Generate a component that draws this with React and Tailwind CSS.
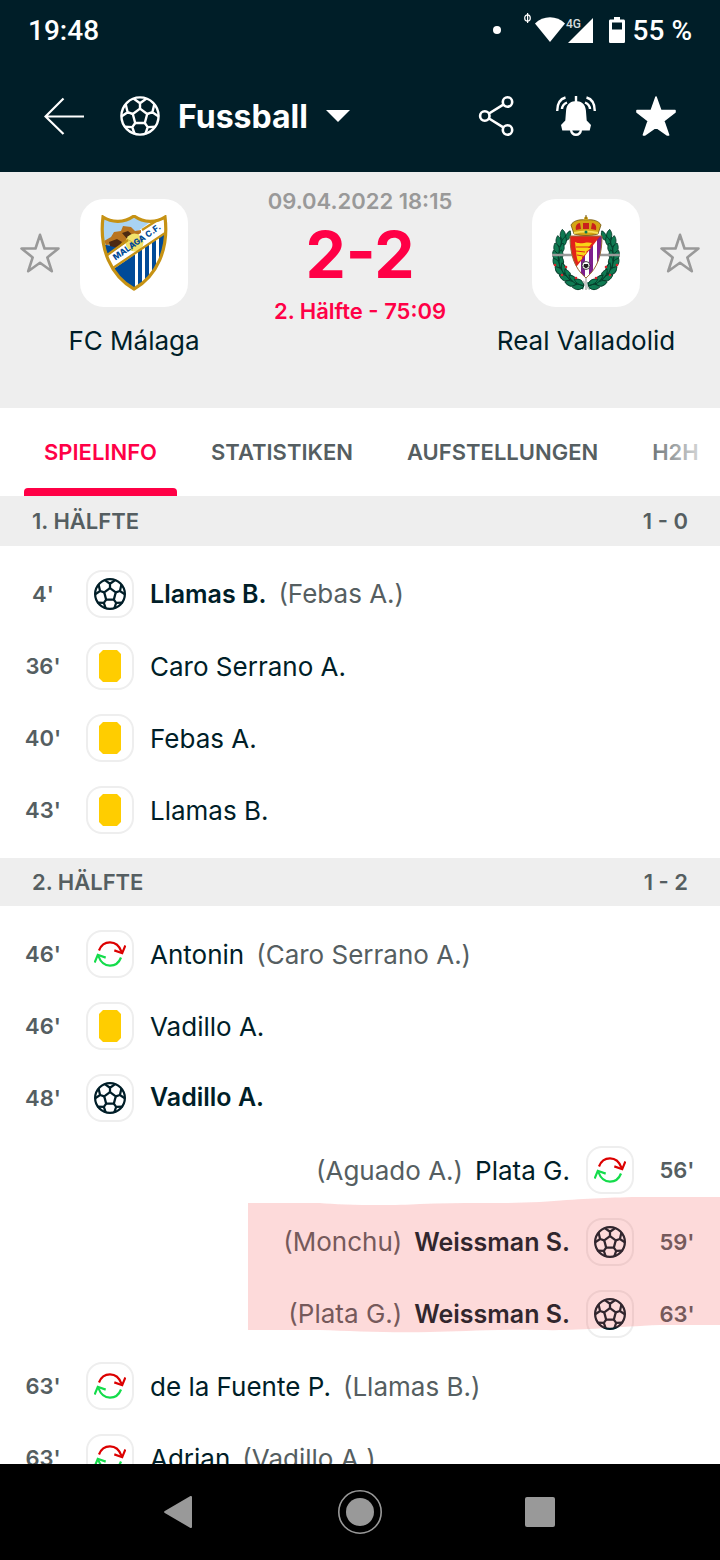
const EVENTS_1 = [
  { minute: "4'", type: "goal", name: "Llamas B.", extra: "(Febas A.)" },
  { minute: "36'", type: "card", name: "Caro Serrano A." },
  { minute: "40'", type: "card", name: "Febas A." },
  { minute: "43'", type: "card", name: "Llamas B." },
];

const EVENTS_2 = [
  { minute: "46'", type: "sub", name: "Antonin", extra: "(Caro Serrano A.)" },
  { minute: "46'", type: "card", name: "Vadillo A." },
  { minute: "48'", type: "goal", name: "Vadillo A." },
  { minute: "56'", type: "sub", name: "Plata G.", extra: "(Aguado A.)", away: true },
];

const MARKED = [
  { minute: "59'", type: "goal", name: "Weissman S.", extra: "(Monchu)", away: true },
  { minute: "63'", type: "goal", name: "Weissman S.", extra: "(Plata G.)", away: true },
];

const EVENTS_3 = [
  { minute: "63'", type: "sub", name: "de la Fuente P.", extra: "(Llamas B.)" },
  { minute: "63'", type: "sub", name: "Adrian", extra: "(Vadillo A.)" },
];

function Ball({ className, strokeWidth = 2.4 }) {
  return (
    <svg viewBox="0 0 40 40" className={className} fill="none" stroke="currentColor" strokeWidth={strokeWidth} strokeLinejoin="round" aria-hidden="true">
      <circle cx="20" cy="20" r="18.6" />
      <path d="M20 12.600 27.200 18l-2.400 9h-9.600l-2.400-9z" />
      <path d="M20 12.600V7.200L13.500 2.600M20 7.200l6.500-4.600M27.200 18l5.200-1.800 1.900-8M32.400 16.200 38.600 20.500M24.800 27l2.900 4.100 8.100-.4M27.700 31.100 25.400 38M15.200 27l-2.900 4.100-8.100-.4M12.300 31.100 14.600 38M12.800 18l-5.200-1.800-1.900-8M7.600 16.200 1.400 20.500" />
    </svg>
  );
}

function SubIcon() {
  return (
    <svg viewBox="0 0 32 32" className="size-8" fill="none" strokeWidth="2.2" aria-hidden="true">
      <path d="M5 12.500C7 7.200 11 4.400 16 4.400c5.200 0 9.400 3.400 11.600 9.600" stroke="#dc0000" />
      <path d="M20.300 12.400l7.900 2.800 3.200-7.800" stroke="#dc0000" />
      <path d="M27 19.500c-2 5.300-6 8.100-11 8.100-5.200 0-9.400-3.400-11.600-9.600" stroke="#14dc4b" />
      <path d="M11.700 19.600l-7.900-2.800L.6 24.600" stroke="#14dc4b" />
    </svg>
  );
}

function EventIcon({ type }) {
  return (
    <span className="flex size-12 shrink-0 items-center justify-center rounded-2xl border-2 border-[#eeeeee] text-[#001e28]">
      {type === "goal" && <Ball className="size-8" strokeWidth={2.8} />}
      {type === "card" && (
        <svg viewBox="0 0 22 32" className="h-8 w-[22px]" aria-hidden="true">
          <path d="M4 0h14l4 4v24l-4 4H4l-4-4V4z" fill="#ffcd00" />
        </svg>
      )}
      {type === "sub" && <SubIcon />}
    </span>
  );
}

function EventRow({ event }) {
  const { minute, type, name, extra, away } = event;
  return (
    <li className={`flex h-[72px] items-center ${away ? "flex-row-reverse" : ""}`}>
      <span className="w-[86px] shrink-0 text-center text-[22px] font-semibold text-[#555e61]">{minute}</span>
      <EventIcon type={type} />
      <span className={`flex items-baseline gap-3 px-4 text-[26px] whitespace-nowrap ${away ? "flex-row-reverse" : ""}`}>
        <span className={type === "goal" ? "text-[25px] font-semibold text-[#001e28]" : "text-[#001e28]"}>{name}</span>
        {extra && <span className="text-[#555e61]">{extra}</span>}
      </span>
    </li>
  );
}

function EventList({ events }) {
  return (
    <ul>
      {events.map((e, i) => (
        <EventRow key={i} event={e} />
      ))}
    </ul>
  );
}

function SectionBar({ title, score }) {
  return (
    <h2 className="flex h-12 items-center justify-between bg-[#eeeeee] px-8 text-[22px] font-semibold text-[#555e61] first:h-[50px]">
      <span>{title}</span>
      <span>{score}</span>
    </h2>
  );
}

function StarButton({ label }) {
  return (
    <button type="button" aria-label={label} className="mt-[34px] size-10 shrink-0 text-[#999999]">
      <svg viewBox="0 0 40 40" className="size-10" fill="none" stroke="currentColor" strokeWidth="2.6" strokeLinejoin="round" aria-hidden="true">
        <path d="M20 1.800l4.500 13.700h14L27.300 24.400l4.500 13.800L20 29.800 8.200 38.200l4.500-13.800L1.500 15.500h14z" />
      </svg>
    </button>
  );
}

function MalagaCrest() {
  return (
    <svg viewBox="0 0 68 76" className="h-[76px] w-[68px]" aria-hidden="true">
      <defs>
        <clipPath id="malaga-shield">
          <path d="M3 2c9 6 21 6 31-1 10 7 22 7 31 1 4 32-8 59-31 72C11 61-1 34 3 2z" />
        </clipPath>
      </defs>
      <g clipPath="url(#malaga-shield)">
        <path d="M0 0h68v76H0z" fill="#fff" />
        <path d="M0 0h60L0 44z" fill="#a9d3f2" />
        <path d="M0 29l12 2 14-1-16 12z" fill="#004a98" />
        <path d="M4 26l7-4 3-5 7-1 2-5 8 1 4 4 6-1v6L22 34l-8-5-8 1z" fill="#b9741f" />
        <path d="M9 27l8-3 5 3-4 6-8-2zM22 18l6-2 6 5-6 4z" fill="#4d2a12" />
        <path d="M12 55 34 40v36z" fill="#004a98" />
        <path d="M34 40v36" stroke="#004a98" strokeWidth="2" />
        <path d="M38 36.500l4-3V76h-4zM45 31.500l4-3V76h-4zM52 26.500l4-3V76h-4zM59 21.500l5-3.500V76h-5z" fill="#004a98" />
        <path d="M8 40 66 1v17L15 52z" fill="#fff" />
      </g>
      <circle cx="34.500" cy="27.500" r="9" fill="#f2e26b" />
      <path d="M27 24l7 4 7-4M34 28l-2 8" fill="none" stroke="#c9b23e" strokeWidth=".8" />
      <g clipPath="url(#malaga-shield)">
        <path d="M6 41 28 25M42 15 64 1M13 53 68 16" fill="none" stroke="#c69214" strokeWidth="2.4" />
      </g>
      <text transform="translate(15.500 45.500) rotate(-35)" fontFamily="Inter, sans-serif" fontSize="8.400" fontWeight="800" fill="#004a98">MALAGA C.F.</text>
      <path d="M3 2c9 6 21 6 31-1 10 7 22 7 31 1 4 32-8 59-31 72C11 61-1 34 3 2z" fill="none" stroke="#c69214" strokeWidth="3.2" />
    </svg>
  );
}

const LEAVES = [
  [13, 22, -10], [9, 28, -5], [7, 35, 0], [6, 42, 5], [7, 49, 15], [10, 56, 30], [15, 62, 45], [21, 67, 60], [28, 70, 75],
];

function Laurel() {
  return (
    <g>
      <path d="M14 20C0 38 6 64 32 71" fill="none" stroke="#0a5c40" strokeWidth="7" />
      {LEAVES.map(([x, y, r]) => (
        <g key={y} transform={`translate(${x} ${y}) rotate(${-r})`}>
          <path d="M0 4C-6 2-6-3-4-7 0-5 1-1 0 4zM0 4C6 2 6-3 4-7 1-5 0-1 0 4z" fill="#0f7a52" stroke="#063d2b" strokeWidth=".9" />
        </g>
      ))}
      <g fill="#d8232a">
        <circle cx="3" cy="50" r="1.3" />
        <circle cx="14" cy="52" r="1.3" />
        <circle cx="10" cy="60" r="1.3" />
        <circle cx="24" cy="63" r="1.3" />
      </g>
    </g>
  );
}

function ValladolidCrest() {
  return (
    <svg viewBox="0 0 68 76" className="h-[76px] w-[68px]" aria-hidden="true">
      <Laurel />
      <g transform="translate(68 0) scale(-1 1)">
        <Laurel />
      </g>
      <path d="M0 40h68" stroke="#9a9a9a" strokeWidth="2.4" />
      <path d="M34 62v13M31 66l6 8" stroke="#c7c7c7" strokeWidth="2" />
      <defs>
        <clipPath id="valladolid-shield">
          <path d="M18 21h32c0 18-4 32-16 42C22 53 18 39 18 21z" />
        </clipPath>
      </defs>
      <g clipPath="url(#valladolid-shield)">
        <path d="M18 20h32v44H18z" fill="#fff" />
        <path d="M29 20h4v44h-4zM37 20h4v44h-4zM45 20h6v44h-6z" fill="#7d1f8d" />
        <path d="M18 20h31L25 51l-7 2z" fill="#e2231a" />
        <path d="M23 27c6 3 11-1 17 1l-4 5h3l-5 4 1 1-5 4v2l-4 3c-2-6-2-13-3-20z" fill="#f9d616" />
        <path d="M24 32h13M24 36l9 1M25 40l6 1" stroke="#e2231a" strokeWidth="1" />
      </g>
      <path d="M18 21h32c0 18-4 32-16 42C22 53 18 39 18 21z" fill="none" stroke="#9a6a34" strokeWidth="1" />
      <circle cx="34" cy="50.500" r="4" fill="#fff" stroke="#222" strokeWidth=".8" />
      <path d="M32 49h4l.6 2.600L34 53.500l-2.600-1.900z" fill="#222" />
      <path d="M22 19 19 10c2-4 8-6 15-5 7-1 13 1 15 5l-3 9c-8 2-16 2-24 0z" fill="#d4a514" stroke="#6e5310" strokeWidth=".8" />
      <path d="M24 15c-1-4 1-7 4-7l1 6zM31 14V8h6v6zM39 14l1-6c3 0 5 3 4 7z" fill="#c9201c" />
      <path d="M22 18c8-2 16-2 24 0" fill="none" stroke="#f6df58" strokeWidth="2" />
      <circle cx="34" cy="17" r="1.5" fill="#0b7a50" />
      <circle cx="34" cy="3.500" r="2" fill="#d4a514" />
      <path d="M34 0v4" stroke="#6e5310" strokeWidth="1" />
    </svg>
  );
}

function Team({ name, children }) {
  return (
    <div className="flex w-[108px] shrink-0 flex-col items-center">
      <div className="flex size-[108px] items-center justify-center rounded-3xl bg-white">{children}</div>
      <span className="mt-4 text-[26px] leading-9 whitespace-nowrap text-[#001e28]">{name}</span>
    </div>
  );
}

function StatusBar() {
  return (
    <div className="flex h-[60px] items-center justify-between px-7 pt-0.5 font-[Roboto,sans-serif] text-[28px] font-medium">
      <span>19:48</span>
      <div className="flex items-center gap-1">
        <svg viewBox="0 0 140 40" className="h-10 w-[140px]" fill="currentColor" aria-hidden="true">
          <circle cx="8" cy="19" r="4" />
          <ellipse cx="38.500" cy="7" rx="2.800" ry="3.200" fill="none" stroke="currentColor" strokeWidth="1.2" />
          <path d="M38 2h1.200v10H38z" />
          <path d="M46 12.500C54 4.200 68 4.200 76 12.500L61 31z" />
          <text x="77" y="17" fontSize="12" fontFamily="Roboto, sans-serif" fill="#d5dbdd">4G</text>
          <path d="M104 7v25H79z" />
          <path d="M120 10c0-1 .6-1.600 1.600-1.600H125V6h6v2.400h3.400c1 0 1.600.6 1.600 1.600v20.400c0 1-.6 1.600-1.600 1.600h-12.800c-1 0-1.600-.6-1.600-1.600zM123 11.500v7h10v-7z" fillRule="evenodd" />
        </svg>
        <span>55 %</span>
      </div>
    </div>
  );
}

function AppBar() {
  return (
    <div className="flex h-28 items-center px-11">
      <button type="button" aria-label="Zurück">
        <svg viewBox="0 0 40 40" className="size-10" fill="none" stroke="currentColor" strokeWidth="2.2" aria-hidden="true">
          <path d="M40 20.500H1.500M19.500 2.500 1.500 20.500l18 17.500" />
        </svg>
      </button>
      <button type="button" className="ml-9 flex items-center gap-[18px]">
        <Ball className="size-10" />
        <span className="pt-0.5 text-[32px] leading-10 font-bold">Fussball</span>
        <svg viewBox="0 0 24 12" className="h-3 w-6" fill="currentColor" aria-hidden="true">
          <path d="M0 0h24L12 12z" />
        </svg>
      </button>
      <div className="ml-auto flex gap-10">
        <button type="button" aria-label="Teilen">
          <svg viewBox="0 0 40 40" className="size-10" fill="none" stroke="currentColor" strokeWidth="2.6" aria-hidden="true">
            <circle cx="31.500" cy="6" r="4.700" />
            <circle cx="8.800" cy="20" r="4.700" />
            <circle cx="31.500" cy="34" r="4.700" />
            <path d="M13 17.500 27.300 8.600M13 22.500l14.300 8.900" />
          </svg>
        </button>
        <button type="button" aria-label="Benachrichtigungen">
          <svg viewBox="0 0 40 40" className="size-10" fill="none" stroke="currentColor" strokeWidth="2.4" aria-hidden="true">
            <path d="M18.800 0h2.400v5.200c5.400.4 8.200 4 8.700 9l.8 10.300 4.300 4.500-1.300 5.500H6.300L5 29l4.300-4.500.8-10.300c.5-5 3.300-8.600 8.700-9z" fill="currentColor" stroke="none" />
            <path d="M15 34c.6 3.200 2.500 4.800 5 4.800s4.400-1.600 5-4.800M9.500 1.500C4 3 1.200 7.500 1.200 15M30.500 1.500C36 3 38.800 7.500 38.800 15M11 6.500C7.800 7.800 6.200 9.800 6 13M29 6.500c3.200 1.300 4.800 3.300 5 6.500" />
          </svg>
        </button>
        <button type="button" aria-label="Favorit">
          <svg viewBox="0 0 40 40" className="size-10" fill="currentColor" stroke="currentColor" strokeWidth="1.6" strokeLinejoin="round" aria-hidden="true">
            <path d="M20 1l4.800 13.600H39v1.600L27.700 24.800 32.600 39h-1.200L20 31 8.600 39H7.400l4.900-14.200L1 16.200v-1.600h14.200z" />
          </svg>
        </button>
      </div>
    </div>
  );
}

function Tabs() {
  return (
    <nav className="relative flex h-[88px] shrink-0 gap-[14px] overflow-hidden bg-white pl-6 text-[22px] font-semibold whitespace-nowrap text-[#555e61]">
      <a href="#spielinfo" aria-current="page" className="relative flex items-center px-5 text-[#ff0046]">
        SPIELINFO
        <span className="absolute inset-x-0 bottom-0 h-2 rounded-t bg-[#ff0046]" />
      </a>
      <a href="#statistiken" className="flex items-center px-5">STATISTIKEN</a>
      <a href="#aufstellungen" className="flex items-center px-5">AUFSTELLUNGEN</a>
      <a href="#h2h" className="flex items-center px-5">H2H</a>
      <span className="pointer-events-none absolute inset-y-0 right-0 w-20 bg-linear-to-r from-white/0 to-white" />
    </nav>
  );
}

export default function App() {
  return (
    <div className="flex h-screen flex-col bg-white font-[Inter,sans-serif]">
      <header className="shrink-0 bg-[#001e28] text-white">
        <StatusBar />
        <AppBar />
      </header>

      <section className="flex h-[236px] shrink-0 items-start justify-between bg-[#eeeeee] px-5 pt-[27px]">
        <div className="flex gap-5">
          <StarButton label="FC Málaga folgen" />
          <Team name="FC Málaga">
            <MalagaCrest />
          </Team>
        </div>
        <div className="-mt-3 flex flex-col items-center whitespace-nowrap">
          <span className="text-[22px] leading-7 font-semibold text-[#999999]">09.04.2022 18:15</span>
          <span className="mt-2 mb-2.5 text-[64px] leading-[64px] font-bold text-[#ff0046]">2-2</span>
          <span className="text-[22px] leading-7 font-semibold text-[#ff0046]">2. Hälfte - 75:09</span>
        </div>
        <div className="flex gap-5">
          <Team name="Real Valladolid">
            <ValladolidCrest />
          </Team>
          <StarButton label="Real Valladolid folgen" />
        </div>
      </section>

      <Tabs />

      <main className="min-h-0 flex-1 overflow-y-auto [scrollbar-width:none]">
        <SectionBar title="1. HÄLFTE" score="1 - 0" />
        <div className="py-3">
          <EventList events={EVENTS_1} />
        </div>
        <SectionBar title="2. HÄLFTE" score="1 - 2" />
        <div className="py-3">
          <EventList events={EVENTS_2} />
          <div className="relative">
            <EventList events={MARKED} />
            <svg viewBox="0 0 472 136" preserveAspectRatio="none" className="pointer-events-none absolute -top-[9px] right-0 h-[136px] w-[472px]" aria-hidden="true">
              <path d="M0 6h72c20 2 70 3 100 1 40-2 80 0 120-2 40-3 60-4 92-5h88v128h-60c-50 2-80 6-120 5-50-1-80 2-110 2-40 1-80-1-110-2H0z" fill="rgb(243 70 70 / 0.2)" />
            </svg>
          </div>
          <EventList events={EVENTS_3} />
        </div>
      </main>

      <nav aria-label="System" className="flex h-24 shrink-0 items-center justify-center gap-[136px] bg-black text-[#999999]">
        <button type="button" aria-label="Zurück">
          <svg viewBox="0 0 44 44" className="size-11" fill="currentColor" aria-hidden="true">
            <path d="M32 6.300c1-.6 2-.2 2 1v29.400c0 1.200-1 1.600-2 1L6.800 23c-1-.6-1-1.400 0-2z" />
          </svg>
        </button>
        <button type="button" aria-label="Startseite">
          <svg viewBox="0 0 44 44" className="size-11" fill="currentColor" aria-hidden="true">
            <circle cx="22" cy="22" r="14" />
            <circle cx="22" cy="22" r="21.200" fill="none" stroke="currentColor" strokeWidth="1.6" />
          </svg>
        </button>
        <button type="button" aria-label="Übersicht">
          <svg viewBox="0 0 44 44" className="size-11" fill="currentColor" aria-hidden="true">
            <rect x="7" y="7" width="30" height="30" rx="2" />
          </svg>
        </button>
      </nav>
    </div>
  );
}
